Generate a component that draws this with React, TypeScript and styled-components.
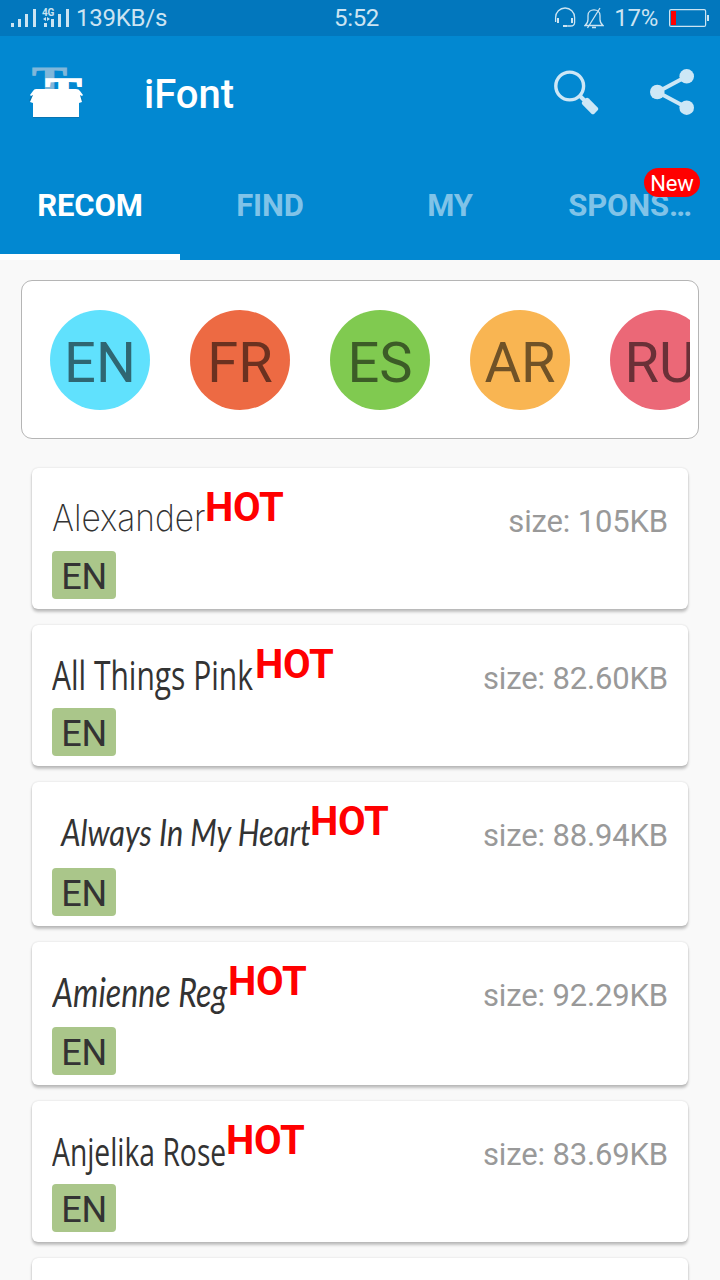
import React from "react";
import styled, { createGlobalStyle } from "styled-components";

const GlobalStyle = createGlobalStyle`
  *, *::before, *::after { box-sizing: border-box; }
  html, body { margin: 0; padding: 0; }
  body { background: #f9f9f9; font-family: Roboto, "Liberation Sans", sans-serif; overflow: hidden; }
`;

const Screen = styled.div`
  width: 720px;
  height: 1280px;
  overflow: hidden;
  display: flex;
  flex-direction: column;
  background: #f9f9f9;
`;

const StatusBar = styled.header`
  height: 36px;
  flex: none;
  display: grid;
  grid-template-columns: 1fr auto 1fr;
  align-items: center;
  padding: 0 11px 0 10px;
  background: #0277bd;
  color: #cce4f2;
  font-size: 24px;
  letter-spacing: -0.25px;
  line-height: 36px;
`;

const StatusGroup = styled.div<{ $end?: boolean }>`
  display: flex;
  align-items: center;
  height: 36px;
  justify-content: ${(p) => (p.$end ? "flex-end" : "flex-start")};
`;

const StatusText = styled.span<{ $left?: number; $right?: number }>`
  margin-left: ${(p) => p.$left ?? 0}px;
  margin-right: ${(p) => p.$right ?? 0}px;
  line-height: 36px;
  white-space: nowrap;
`;

const Clock = styled.span`
  margin: 0 6px 0 0;
  letter-spacing: -0.3px;
`;

const AppBar = styled.div`
  height: 116px;
  flex: none;
  display: flex;
  align-items: center;
  padding: 0 25px 4px 28px;
  background: #0288d1;
`;

const Title = styled.h1`
  flex: 1;
  margin: 6px 0 0 60px;
  color: #fff;
  font-size: 40px;
  font-weight: 500;
  line-height: 48px;
`;

const IconButton = styled.button<{ $gap?: number }>`
  display: flex;
  margin: 0 0 0 ${(p) => p.$gap ?? 0}px;
  padding: 0;
  border: 0;
  background: none;
`;

const Tabs = styled.nav`
  height: 108px;
  flex: none;
  display: grid;
  grid-template-columns: repeat(4, 180px);
  background: #0288d1;
`;

const Tab = styled.div<{ $active?: boolean }>`
  position: relative;
  display: flex;
  align-items: center;
  justify-content: center;
  padding-top: 4px;
  border-bottom: 6px solid ${(p) => (p.$active ? "#fff" : "transparent")};
  color: ${(p) => (p.$active ? "#fff" : "#80c3e8")};
  font-size: 31px;
  letter-spacing: -0.15px;
  font-weight: 700;
  white-space: nowrap;
`;

const NewBadge = styled.span`
  position: absolute;
  top: 16px;
  right: 20px;
  width: 56px;
  height: 29px;
  border-radius: 14.5px;
  background: #f00;
  color: #fff;
  font-size: 22px;
  font-weight: 400;
  line-height: 31px;
  text-align: center;
`;

const Languages = styled.section`
  flex: none;
  height: 159px;
  margin: 20px 21px 0;
  padding: 29px 8px 0 28px;
  border: 1px solid #b5b5b5;
  border-radius: 11px;
  background: #fff;
`;

const LanguageScroller = styled.div`
  display: flex;
  gap: 40px;
  overflow: hidden;
`;

const Language = styled.div<{ $color: string; $ink: string }>`
  flex: none;
  width: 100px;
  height: 100px;
  border-radius: 50%;
  display: flex;
  align-items: center;
  justify-content: center;
  padding-top: 6px;
  background: ${(p) => p.$color};
  color: ${(p) => p.$ink};
  font-size: 56px;
`;

const FontList = styled.main`
  display: flex;
  flex-direction: column;
  gap: 16px;
  padding: 29px 32px 0;
`;

const Card = styled.article<{ $height: number }>`
  flex: none;
  height: ${(p) => p.$height}px;
  display: flex;
  flex-direction: column;
  justify-content: space-between;
  padding: 20px 20px 10px;
  border-radius: 6px;
  background: #fff;
  box-shadow: 0 3px 3px rgba(0, 0, 0, 0.23), 0 0 2px rgba(0, 0, 0, 0.16);
`;

const CardTop = styled.div`
  display: flex;
  align-items: flex-start;
  height: 60px;
`;

const NameBox = styled.div<{ $width: number }>`
  width: ${(p) => p.$width}px;
  height: 62px;
  overflow: hidden;
`;

const FontName = styled.span<{
  $family: string;
  $size: number;
  $weight: number;
  $scale: number;
  $slant?: boolean;
  $indent?: number;
}>`
  display: inline-block;
  padding-left: ${(p) => p.$indent ?? 0}px;
  color: #333;
  font-family: ${(p) => p.$family}, sans-serif;
  font-size: ${(p) => p.$size}px;
  font-weight: ${(p) => p.$weight};
  font-style: ${(p) => (p.$slant ? "italic" : "normal")};
  line-height: 60px;
  white-space: nowrap;
  transform: scaleX(${(p) => p.$scale});
  transform-origin: 0 50%;
`;

const Hot = styled.strong`
  color: #f00;
  font-size: 40px;
  font-weight: 700;
  letter-spacing: -0.3px;
  line-height: 40px;
`;

const Size = styled.span`
  margin: 14px 0 0 auto;
  color: #999;
  font-size: 31px;
  letter-spacing: -0.15px;
  line-height: 40px;
`;

const Tag = styled.span`
  width: 64px;
  height: 48px;
  border-radius: 4px;
  background: #aac68a;
  color: #333;
  font-size: 36px;
  letter-spacing: -0.4px;
  line-height: 53px;
  text-align: center;
`;

const SignalIcon = () => (
  <svg width="59" height="24" viewBox="10 6 59 24" fill="#cce4f2">
    <path d="M11 23h3v4h-3zM18 19h3v8h-3zM25 14h3v13h-3zM33 9h3v18h-3z" />
    <path d="M44 23h3v4h-3zM51 19h3v8h-3zM58 14h3v13h-3zM66 9h3v18h-3z" />
    <text x="42" y="16" fontSize="10" fontWeight="700" fontFamily="Roboto, sans-serif">4G</text>
    <path d="M43 19l3-2v4zM50 19l-3-2v4z" />
  </svg>
);

const HeadsetIcon = () => (
  <svg width="22" height="22" viewBox="554 7 22 22" fill="none" stroke="#cce4f2" strokeWidth="1.3">
    <path d="M555.600 22v-4.500a9.500 9.500 0 0 1 19 0v5q0 3.500-4 3.500h-3" />
    <path d="M558 18v5M572 18v5" strokeWidth="2" />
    <path d="M563 26h4.500" strokeWidth="2" />
  </svg>
);

const MutedBellIcon = () => (
  <svg width="20" height="22" viewBox="584 7 20 22" fill="none" stroke="#cce4f2" strokeWidth="1.300">
    <path d="M585 25.500q3-2.500 3-6v-4c0-7.500 12-7.500 12 0v4q0 3.500 3 6zM592 27.500h4M600 8l-12.500 20" />
  </svg>
);

const BatteryIcon = () => (
  <svg width="40" height="20" viewBox="669 8 40 20">
    <rect x="669.600" y="9.600" width="36" height="16.800" rx="1.500" fill="none" stroke="#cce4f2" strokeWidth="1.200" />
    <rect x="671" y="11" width="5" height="14" fill="#f00" />
    <rect x="707" y="15" width="2" height="6" fill="#cce4f2" />
  </svg>
);

const LogoIcon = () => (
  <svg width="56" height="54" viewBox="28 65 56 54">
    <text x="32" y="94" fontFamily="Liberation Serif, serif" fontWeight="700" fontSize="40" textLength="35" lengthAdjust="spacingAndGlyphs" fill="#80b7da" stroke="#80b7da" strokeWidth="1">T</text>
    <text x="45.500" y="104.500" fontFamily="Liberation Serif, serif" fontWeight="700" fontSize="40" textLength="36" lengthAdjust="spacingAndGlyphs" fill="#fff" stroke="#fff" strokeWidth="1.600">T</text>
    <path d="M34 90.500h44l5 10-4 2v15.500H33v-15.500l-4-2z" fill="#0d5f91" opacity=".5" />
    <path d="M36 89h40q3 0 4 2l3 4-1 1-2-1 2 7-3 1v14H33v-14l-3-1 3-7-2 1-1-1 3-4q1-2 3-2z" fill="#fff" />
  </svg>
);

const SearchIcon = () => (
  <svg width="46" height="46" viewBox="553 69 46 46" fill="none" stroke="#cde7f6">
    <circle cx="569.700" cy="86" r="13.900" strokeWidth="3.400" />
    <path d="M580 96l5 5" strokeWidth="4" />
    <rect x="-8.500" y="-4.400" width="17" height="8.800" rx="2.400" fill="#cde7f6" stroke="none" transform="translate(590 106) rotate(45)" />
  </svg>
);

const ShareIcon = () => (
  <svg width="46" height="48" viewBox="649 68 46 48" fill="#cde7f6">
    <path d="M686.500 76.500L657.500 92l29 15.500" fill="none" stroke="#cde7f6" strokeWidth="4" />
    <circle cx="686.700" cy="76.300" r="7.300" />
    <circle cx="657.300" cy="92" r="7.300" />
    <circle cx="686.700" cy="107.700" r="7.300" />
  </svg>
);

const languages = [
  { code: "EN", color: "#60e1fd", ink: "#2f6672" },
  { code: "FR", color: "#ed6a43", ink: "#6b3120" },
  { code: "ES", color: "#80ca50", ink: "#3c5c27" },
  { code: "AR", color: "#f9b552", ink: "#705227" },
  { code: "RU", color: "#eb6877", ink: "#6a3037" },
];

const fonts = [
  { name: "Alexander", size: "105KB", height: 141, width: 153, family: "Inter", px: 37, weight: 200, scale: 0.905 },
  { name: "All Things Pink", size: "82.60KB", height: 141, width: 203, family: "Open Sans", px: 40, weight: 400, scale: 0.75 },
  { name: "Always In My Heart", size: "88.94KB", height: 144, width: 258, family: "Lato", px: 37, weight: 400, scale: 0.83, slant: true, indent: 11 },
  { name: "Amienne Reg", size: "92.29KB", height: 143, width: 176, family: "Lato", px: 41, weight: 400, scale: 0.785, slant: true, indent: 1 },
  { name: "Anjelika Rose", size: "83.69KB", height: 141, width: 174, family: "Open Sans", px: 39, weight: 400, scale: 0.725 },
];

export default function App() {
  return (
    <>
      <GlobalStyle />
      <Screen>
        <StatusBar>
          <StatusGroup>
            <SignalIcon />
            <StatusText $left={7}>139KB/s</StatusText>
          </StatusGroup>
          <Clock>5:52</Clock>
          <StatusGroup $end>
            <HeadsetIcon />
            <StatusText $left={8} />
            <MutedBellIcon />
            <StatusText $left={10} $right={11}>17%</StatusText>
            <BatteryIcon />
          </StatusGroup>
        </StatusBar>
        <AppBar>
          <LogoIcon />
          <Title>iFont</Title>
          <IconButton aria-label="Search"><SearchIcon /></IconButton>
          <IconButton aria-label="Share" $gap={50}><ShareIcon /></IconButton>
        </AppBar>
        <Tabs>
          <Tab $active>RECOM</Tab>
          <Tab>FIND</Tab>
          <Tab>MY</Tab>
          <Tab>
            SPONS…
            <NewBadge>New</NewBadge>
          </Tab>
        </Tabs>
        <Languages>
          <LanguageScroller>
            {languages.map((l) => (
              <Language key={l.code} $color={l.color} $ink={l.ink}>{l.code}</Language>
            ))}
          </LanguageScroller>
        </Languages>
        <FontList>
          {fonts.map((f) => (
            <Card key={f.name} $height={f.height}>
              <CardTop>
                <NameBox $width={f.width}>
                  <FontName
                    $family={f.family}
                    $size={f.px}
                    $weight={f.weight}
                    $scale={f.scale}
                    $slant={f.slant}
                    $indent={f.indent}
                  >
                    {f.name}
                  </FontName>
                </NameBox>
                <Hot>HOT</Hot>
                <Size>size: {f.size}</Size>
              </CardTop>
              <Tag>EN</Tag>
            </Card>
          ))}
          <Card $height={141} />
        </FontList>
      </Screen>
    </>
  );
}
